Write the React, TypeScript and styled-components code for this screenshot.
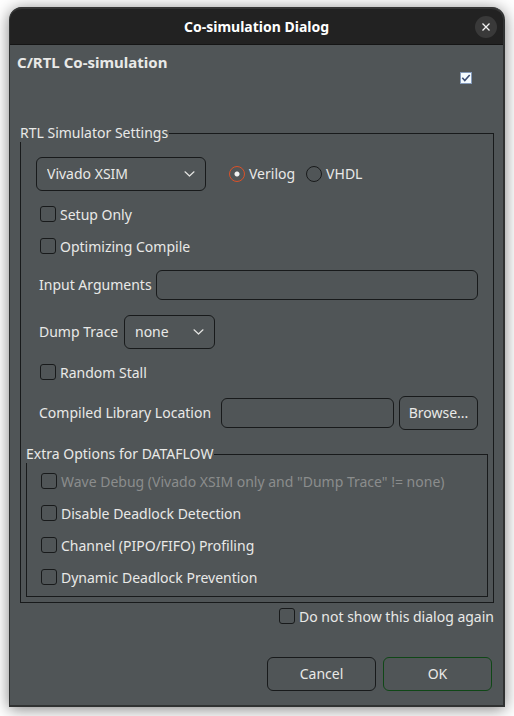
import React, { useState } from 'react';
import styled, { createGlobalStyle } from 'styled-components';

const surface = '#505557';
const line = '#181a1b';
const text = '#e9e9e7';

const GlobalStyle = createGlobalStyle`
  *, *::before, *::after { box-sizing: border-box; }
  body {
    margin: 0;
    background: #ffffff;
    color: ${text};
    font: 14px/18px "Noto Sans", sans-serif;
  }
  button, input, select { font: inherit; color: inherit; margin: 0; }
`;

const Page = styled.div`
  display: flow-root;
  overflow: hidden;
  padding: 7px 9px 9px;
`;

const Dialog = styled.section`
  background: ${surface};
  border: solid #303232;
  border-width: 0 2px 2px 1px;
  border-radius: 13px 13px 0 0;
  box-shadow: 0 2px 16px rgba(0, 0, 0, 0.5);
`;

const TitleBar = styled.header`
  display: grid;
  grid-template-columns: 1fr auto 1fr;
  align-items: center;
  height: 38px;
  padding: 0 6px;
  background: #222222;
  border-top: 2px solid #353535;
  border-bottom: 1px solid #151515;
  border-radius: 12px 12px 0 0;
`;

const Title = styled.h1`
  grid-column: 2;
  margin: 0;
  color: #ffffff;
  font-size: 14px;
  line-height: 20px;
`;

const CloseButton = styled.button`
  display: grid;
  place-items: center;
  justify-self: end;
  width: 22px;
  height: 22px;
  padding: 0;
  border: 0;
  border-radius: 50%;
  background: #393939;
  color: #f2f2f2;
`;

const Body = styled.div`
  padding: 8px 9px 14px 10px;
`;

const Intro = styled.div`
  display: flex;
  justify-content: space-between;
  align-items: flex-start;
  min-height: 71px;
  padding-right: 22px;
`;

const Heading = styled.h2`
  margin: 0 0 0 -3px;
  font: bold 15px/18px "Noto Sans", sans-serif;
`;

const TickBox = styled.label`
  display: grid;
  margin-top: 19px;
  > * { grid-area: 1 / 1; }
  svg { pointer-events: none; }
  input:not(:checked) + svg { visibility: hidden; }
`;

const TickInput = styled.input`
  appearance: none;
  width: 12px;
  height: 12px;
  border: 1px solid #8399ba;
  background: #f4fbff;
`;

const Group = styled.fieldset<{ $inner?: boolean }>`
  min-width: 0;
  margin: ${p => (p.$inner ? '7px 5px 0' : '0')};
  padding: ${p => (p.$inner ? '2px 14px 3px' : '8px 0 5px')};
  border: 1px solid ${line};
`;

const Legend = styled.legend<{ $inner?: boolean }>`
  margin-left: ${p => (p.$inner ? '-15px' : '-1px')};
  padding: 0 1px 0 0;
  background: ${surface};
`;

const Row = styled.div<{ $indent?: number; $height?: number }>`
  display: flex;
  align-items: center;
  gap: 5px;
  min-height: ${p => p.$height ?? 48}px;
  padding: 0 15px 0 ${p => p.$indent ?? 18}px;
`;

const Radios = styled.div`
  display: flex;
  gap: 11px;
  margin-left: 18px;
`;

const OptionLabel = styled.label<{ $disabled?: boolean; $height?: number }>`
  display: flex;
  align-items: center;
  gap: 4px;
  min-height: ${p => p.$height ?? 32}px;
  color: ${p => (p.$disabled ? '#8b8d8d' : text)};
`;

const OptionText = styled.span`
  padding-top: 2px;
`;

const CheckList = styled.div<{ $indent?: boolean }>`
  padding-left: ${p => (p.$indent ? '19px' : '0')};
`;

const CheckInput = styled.input`
  appearance: none;
  flex: none;
  width: 16px;
  height: 16px;
  border: 1px solid ${line};
  border-radius: 3px;
  &:checked { background: #e95420; }
`;

const RadioInput = styled.input`
  appearance: none;
  flex: none;
  width: 16px;
  height: 16px;
  border: 1px solid ${line};
  border-radius: 50%;
  &:checked {
    border-color: #dc5128;
    background: radial-gradient(circle, #f2f2f2 2px, transparent 3px);
  }
`;

const SelectBox = styled.div<{ $width: number }>`
  display: grid;
  align-items: center;
  width: ${p => p.$width}px;
  > * { grid-area: 1 / 1; }
  svg { justify-self: end; margin-right: 11px; pointer-events: none; }
`;

const Select = styled.select`
  appearance: none;
  width: 100%;
  height: 34px;
  padding: 0 30px 0 10px;
  border: 1px solid ${line};
  border-radius: 6px;
  background: ${surface};
`;

const TextInput = styled.input`
  flex: 1;
  min-width: 0;
  height: 30px;
  padding: 0 8px;
  border: 1px solid ${line};
  border-radius: 6px;
  background: transparent;
`;

const Button = styled.button<{ $width: number; $primary?: boolean }>`
  flex: none;
  width: ${p => p.$width}px;
  height: 34px;
  padding: 0;
  border: 1px solid ${p => (p.$primary ? '#0f4716' : line)};
  border-radius: 6px;
  background: transparent;
`;

const FieldLabel = styled.label<{ $width: number }>`
  flex: none;
  width: ${p => p.$width}px;
  white-space: nowrap;
`;

const Remember = styled.div`
  display: flex;
  justify-content: flex-end;
`;

const Actions = styled.footer`
  display: flex;
  justify-content: flex-end;
  gap: 7px;
  margin-top: 28px;
  padding-right: 2px;
`;

function CheckOption({ label, disabled, height }: { label: string; disabled?: boolean; height?: number }) {
  return (
    <OptionLabel $disabled={disabled} $height={height}>
      <CheckInput type="checkbox" disabled={disabled} />
      <OptionText>{label}</OptionText>
    </OptionLabel>
  );
}

function Dropdown({ id, label, options, width }: { id: string; label?: string; options: string[]; width: number }) {
  return (
    <SelectBox $width={width}>
      <Select id={id} aria-label={label}>
        {options.map(o => <option key={o}>{o}</option>)}
      </Select>
      <svg width="11" height="6" viewBox="0 0 11 6" fill="none" stroke="#e4e4e2" strokeWidth="1.2" strokeLinecap="round" strokeLinejoin="round" aria-hidden="true">
        <path d="M1 .8 5.5 5 10 .8" />
      </svg>
    </SelectBox>
  );
}

export default function App() {
  const [language, setLanguage] = useState('Verilog');
  return (
    <Page>
      <GlobalStyle />
      <Dialog role="dialog" aria-labelledby="dialog-title">
        <TitleBar>
          <Title id="dialog-title">Co-simulation Dialog</Title>
          <CloseButton type="button" aria-label="Close">
            <svg width="8" height="8" viewBox="0 0 8 8" fill="none" stroke="currentColor" strokeWidth="1.3" aria-hidden="true">
              <path d="M.5.5 7.5 7.5M7.5.5.5 7.5" />
            </svg>
          </CloseButton>
        </TitleBar>
        <Body>
          <Intro>
            <Heading>C/RTL Co-simulation</Heading>
            <TickBox>
              <TickInput type="checkbox" defaultChecked aria-label="C/RTL Co-simulation" />
              <svg width="12" height="12" viewBox="0 0 12 12" fill="none" stroke="#3d4e75" strokeWidth="1.6" aria-hidden="true">
                <path d="M2.3 5.8 4.8 8.6 9.7 3" />
              </svg>
            </TickBox>
          </Intro>
          <Group>
            <Legend>RTL Simulator Settings</Legend>
            <Row $indent={15}>
              <Dropdown id="simulator" label="RTL simulator" options={['Vivado XSIM', 'ModelSim', 'VCS', 'Riviera']} width={170} />
              <Radios>
                {['Verilog', 'VHDL'].map(name => (
                  <OptionLabel key={name}>
                    <RadioInput type="radio" name="language" checked={language === name} onChange={() => setLanguage(name)} />
                    {name}
                  </OptionLabel>
                ))}
              </Radios>
            </Row>
            <CheckList $indent>
              <CheckOption label="Setup Only" />
              <CheckOption label="Optimizing Compile" />
            </CheckList>
            <Row $height={46}>
              <FieldLabel htmlFor="arguments" $width={112}>Input Arguments</FieldLabel>
              <TextInput id="arguments" type="text" />
            </Row>
            <Row>
              <FieldLabel htmlFor="trace" $width={80}>Dump Trace</FieldLabel>
              <Dropdown id="trace" options={['none', 'port', 'all']} width={91} />
            </Row>
            <CheckList $indent>
              <CheckOption label="Random Stall" />
            </CheckList>
            <Row $height={50}>
              <FieldLabel htmlFor="library" $width={177}>Compiled Library Location</FieldLabel>
              <TextInput id="library" type="text" />
              <Button type="button" $width={79}>Browse...</Button>
            </Row>
            <Group $inner>
              <Legend $inner>Extra Options for DATAFLOW</Legend>
              <CheckList>
                <CheckOption label={'Wave Debug (Vivado XSIM only and "Dump Trace" != none)'} disabled />
                <CheckOption label="Disable Deadlock Detection" />
                <CheckOption label="Channel (PIPO/FIFO) Profiling" />
                <CheckOption label="Dynamic Deadlock Prevention" />
              </CheckList>
            </Group>
          </Group>
          <Remember>
            <CheckOption label="Do not show this dialog again" height={26} />
          </Remember>
          <Actions>
            <Button type="button" $width={109}>Cancel</Button>
            <Button type="button" $width={109} $primary>OK</Button>
          </Actions>
        </Body>
      </Dialog>
    </Page>
  );
}
